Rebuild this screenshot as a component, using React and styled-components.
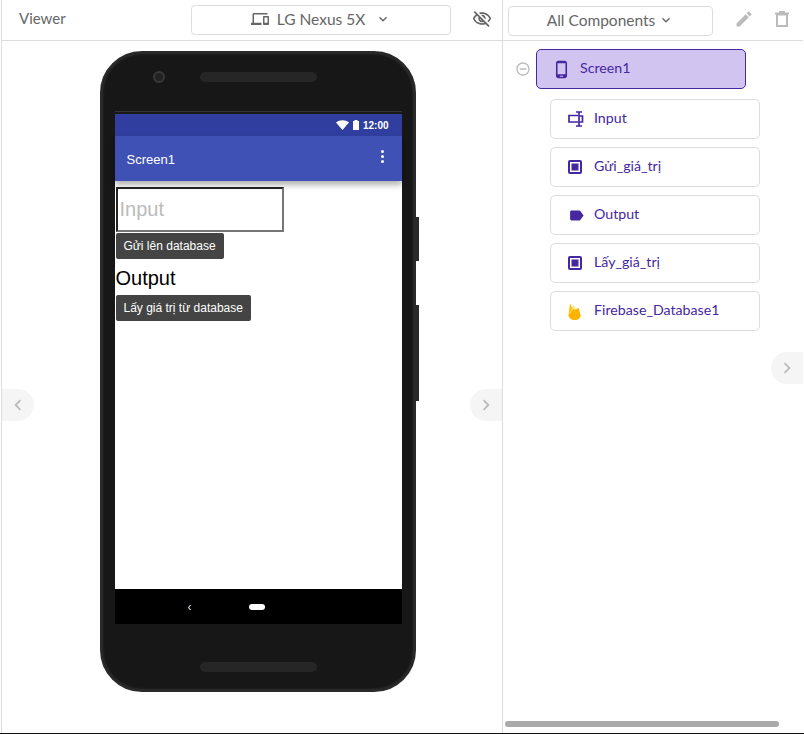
import React from "react";
import styled, { createGlobalStyle } from "styled-components";
import {
  MdChevronLeft,
  MdChevronRight,
  MdEdit,
  MdKeyboardArrowDown,
  MdLabel,
  MdOutlineDevices,
  MdOutlinePhoneAndroid,
  MdOutlineRemoveCircleOutline,
  MdOutlineVisibilityOff,
} from "react-icons/md";

const GlobalStyle = createGlobalStyle`
  html, body {
    margin: 0;
    background: #fff;
  }
  * {
    box-sizing: border-box;
  }
`;

const PURPLE = "#4527a0";

const InputIcon = () => (
  <svg width="17" height="16" viewBox="0 0 17 16" fill="none" stroke={PURPLE} strokeWidth="1.7">
    <path d="M10 4.500H1v6.500h9" />
    <path d="M11 1v14M8 1h6M8 15h6M11 5h3.500v6H11" />
  </svg>
);

const ButtonIcon = () => (
  <svg width="14" height="14" viewBox="0 0 14 14">
    <rect x="1" y="1" width="12" height="12" rx="1" fill="none" stroke={PURPLE} strokeWidth="2" />
    <rect x="3.500" y="3.500" width="7" height="7" fill={PURPLE} />
  </svg>
);

const FirebaseIcon = () => (
  <svg width="13" height="17" viewBox="0 0 13 17">
    <path d="M.5 11 2 .5l3 5.500z" fill="#ffc107" />
    <path d="M3 7 5.500 2 9 8z" fill="#ffe082" />
    <path d="M.5 11.500 5 6l2 1 3.500-2 2 7.500c0 2.500-3 4.500-6 4.500S.5 14.500.5 11.500z" fill="#ffc107" />
    <path d="M.5 11.500 7 7l3.500-2 2 7.500c0 2.500-3 4.500-6 4.500S.5 14.500.5 11.500z" fill="#ffb300" />
  </svg>
);

const TrashIcon = () => (
  <svg width="14" height="16" viewBox="0 0 14 16" fill="none" stroke="#bbb">
    <path d="M0 2.500h14" strokeWidth="2" />
    <path d="M4 1h6" strokeWidth="2" />
    <rect x="2" y="3.500" width="10" height="11.500" strokeWidth="2" />
  </svg>
);

const Root = styled.div`
  width: 804px;
  height: 734px;
  display: flex;
  padding-left: 1px;
  border-bottom: 1px solid #111;
  font-family: "Lato", "Liberation Sans", sans-serif;
  overflow: hidden;
`;

const Panel = styled.section`
  position: relative;
  width: ${(p) => p.$width}px;
  height: 100%;
  border-left: 1px solid #ddd;
  flex-shrink: 0;
`;

const Header = styled.header`
  height: 41px;
  display: flex;
  align-items: center;
  border-bottom: 1px solid #ddd;
  color: #666;
`;

const Title = styled.span`
  width: 189px;
  padding-left: 17px;
  font-size: 15px;
  margin-top: -4px;
`;

const Select = styled.div`
  width: ${(p) => p.$width}px;
  height: 30px;
  margin: ${(p) => p.$top}px 0 0 ${(p) => p.$left || 0}px;
  display: flex;
  align-items: center;
  justify-content: center;
  gap: ${(p) => p.$gap || 6}px;
  padding-bottom: 2px;
  border: 1px solid #ddd;
  border-radius: 4px;
  font-size: 15.5px;
  color: #666;
  svg {
    flex-shrink: 0;
  }
`;

const HeaderIcon = styled.span`
  display: flex;
  margin-left: ${(p) => p.$left}px;
  margin-top: -3px;
  color: ${(p) => p.$color};
`;

const PhoneStage = styled.div`
  display: flex;
  justify-content: center;
  padding: 10px 0 0 16px;
  width: 500px;
`;

const Phone = styled.div`
  position: relative;
  width: 316px;
  height: 641px;
  margin-right: 5px;
  padding: 58px 14px 0 15px;
  border: 2px solid #2a2a2a;
  border-radius: 42px;
  background: #171717;
  box-shadow: inset 0 0 3px rgba(255, 255, 255, 0.22);
`;

const Camera = styled.span`
  position: absolute;
  top: 18px;
  left: 51px;
  width: 12px;
  height: 12px;
  border-radius: 50%;
  border: 2px solid #383838;
  background: #222;
`;

const Speaker = styled.span`
  position: absolute;
  left: 98px;
  width: 117px;
  height: 10px;
  border-radius: 5px;
  background: #262626;
  ${(p) => (p.$bottom ? "bottom: 18px;" : "top: 19px;")}
`;

const SideKey = styled.span`
  position: absolute;
  right: -5px;
  top: ${(p) => p.$top}px;
  width: 3px;
  height: ${(p) => p.$height}px;
  background: #2a2a2a;
`;

const Screen = styled.div`
  width: 287px;
  height: 513px;
  margin-left: -2px;
  display: flex;
  flex-direction: column;
  background: #fff;
  font-family: "Liberation Sans", "Roboto", sans-serif;
  border-top: 1px solid #333;
`;

const StatusBar = styled.div`
  height: 24px;
  border-top: 2px solid #181818;
  display: flex;
  align-items: center;
  justify-content: flex-end;
  gap: 4px;
  padding-right: 13px;
  background: #303f9f;
  color: #fff;
  font-size: 10px;
  font-weight: 700;
`;

const AppBar = styled.div`
  height: 45px;
  display: flex;
  align-items: center;
  justify-content: space-between;
  padding: 1px 18px 0 12px;
  background: #3f51b5;
  color: #fff;
  font-size: 13px;
  box-shadow: 0 4px 6px rgba(0, 0, 0, 0.3);
`;

const Dots = styled.span`
  display: flex;
  flex-direction: column;
  gap: 2px;
  margin-top: -5px;
  i {
    width: 3px;
    height: 3px;
    border-radius: 50%;
    background: #fff;
  }
`;

const Form = styled.div`
  flex: 1;
  display: flex;
  flex-direction: column;
  align-items: flex-start;
  padding: 6px 0 0 1px;
`;

const PreviewInput = styled.div`
  width: 168px;
  height: 45px;
  display: flex;
  align-items: center;
  padding-left: 2px;
  border: 2px solid;
  border-color: #222 #767676 #767676 #222;
  color: #bbb;
  font-size: 20px;
`;

const PreviewButton = styled.div`
  height: 26px;
  margin-top: 1px;
  padding: 0 8px;
  display: flex;
  align-items: center;
  border-radius: 2px;
  background: #444;
  color: #fff;
  font-size: 12px;
`;

const PreviewLabel = styled.div`
  margin-top: 6px;
  height: 29px;
  line-height: 26px;
  font-size: 20px;
  color: #000;
`;

const NavBar = styled.div`
  height: 35px;
  display: flex;
  align-items: center;
  padding-left: 73px;
  background: #000;
  color: #ddd;
  font-size: 12px;
`;

const HomePill = styled.span`
  width: 16px;
  height: 6px;
  margin-left: 57px;
  border-radius: 3px;
  background: #fff;
`;

const Tree = styled.div`
  padding: 8px 0 0 12px;
  display: flex;
  flex-direction: column;
  gap: 8px;
`;

const TreeRoot = styled.div`
  display: flex;
  align-items: center;
  gap: 5px;
  margin-bottom: 2px;
  color: #bbb;
`;

const Card = styled.div`
  width: 210px;
  height: 40px;
  margin-left: ${(p) => (p.$active ? 0 : 35)}px;
  display: flex;
  align-items: center;
  padding-left: ${(p) => (p.$active ? 15 : 17)}px;
  gap: 9px;
  border: 1px solid ${(p) => (p.$active ? PURPLE : "#ddd")};
  border-radius: 5px;
  background: ${(p) => (p.$active ? "#d1c4f0" : "#fff")};
  color: ${PURPLE};
  font-size: 14.2px;
  span {
    margin-top: -3px;
  }
`;

const IconSlot = styled.div`
  width: 17px;
  display: flex;
  align-items: center;
`;

const Pager = styled.div`
  position: absolute;
  top: ${(p) => p.$top}px;
  ${(p) => (p.$side === "left" ? "left: 0;" : "right: 0;")}
  width: 32px;
  height: 32px;
  display: flex;
  align-items: center;
  justify-content: center;
  background: #f5f5f5;
  color: #bbb;
  border-radius: ${(p) => (p.$side === "left" ? "0 16px 16px 0" : "16px 0 0 16px")};
`;

const ScrollThumb = styled.div`
  position: absolute;
  left: 2px;
  bottom: 6px;
  width: 274px;
  height: 6px;
  border-radius: 3px;
  background: #aaa;
`;

const components = [
  { name: "Input", icon: <InputIcon /> },
  { name: "Gửi_giá_trị", icon: <ButtonIcon /> },
  { name: "Output", icon: <MdLabel size={17} color={PURPLE} /> },
  { name: "Lấy_giá_trị", icon: <ButtonIcon /> },
  { name: "Firebase_Database1", icon: <FirebaseIcon /> },
];

export default function App() {
  return (
    <Root>
      <GlobalStyle />
      <Panel $width={501}>
        <Header>
          <Title>Viewer</Title>
          <Select $width={260} $top={-1} $gap={8}>
            <MdOutlineDevices size={18} />
            LG Nexus 5X
            <MdKeyboardArrowDown size={16} style={{ marginLeft: 2 }} />
          </Select>
          <HeaderIcon $left={21} $color="#666">
            <MdOutlineVisibilityOff size={20} />
          </HeaderIcon>
        </Header>
        <PhoneStage>
          <Phone>
            <Camera />
            <Speaker />
            <SideKey $top={164} $height={44} />
            <SideKey $top={252} $height={96} />
            <Screen>
              <StatusBar>
                <svg width="13" height="10" viewBox="0 0 13 10">
                  <path d="M0 2.500C3.500-.5 9.500-.5 13 2.500L6.500 10z" fill="#fff" />
                </svg>
                <svg width="6" height="10" viewBox="0 0 6 10">
                  <path d="M0 1h1.500V0h3v1H6v9H0z" fill="#fff" />
                </svg>
                <span>12:00</span>
              </StatusBar>
              <AppBar>
                Screen1
                <Dots>
                  <i />
                  <i />
                  <i />
                </Dots>
              </AppBar>
              <Form>
                <PreviewInput>Input</PreviewInput>
                <PreviewButton>Gửi lên database</PreviewButton>
                <PreviewLabel>Output</PreviewLabel>
                <PreviewButton>Lấy giá trị từ database</PreviewButton>
              </Form>
              <NavBar>
                ‹
                <HomePill />
              </NavBar>
            </Screen>
            <Speaker $bottom />
          </Phone>
        </PhoneStage>
        <Pager $side="left" $top={389}>
          <MdChevronLeft size={22} />
        </Pager>
        <Pager $side="right" $top={389}>
          <MdChevronRight size={22} />
        </Pager>
      </Panel>
      <Panel $width={301}>
        <Header>
          <Select $width={205} $top={1} $left={5} $gap={3}>
            All Components
            <MdKeyboardArrowDown size={16} />
          </Select>
          <HeaderIcon $left={21} $color="#bbb">
            <MdEdit size={20} />
          </HeaderIcon>
          <HeaderIcon $left={21} $color="#bbb">
            <TrashIcon />
          </HeaderIcon>
        </Header>
        <Tree>
          <TreeRoot>
            <MdOutlineRemoveCircleOutline size={16} />
            <Card $active>
              <MdOutlinePhoneAndroid size={19} />
              <span>Screen1</span>
            </Card>
          </TreeRoot>
          {components.map((c) => (
            <Card key={c.name}>
              <IconSlot>{c.icon}</IconSlot>
              <span>{c.name}</span>
            </Card>
          ))}
        </Tree>
        <Pager $side="right" $top={352}>
          <MdChevronRight size={22} />
        </Pager>
        <ScrollThumb />
      </Panel>
    </Root>
  );
}
